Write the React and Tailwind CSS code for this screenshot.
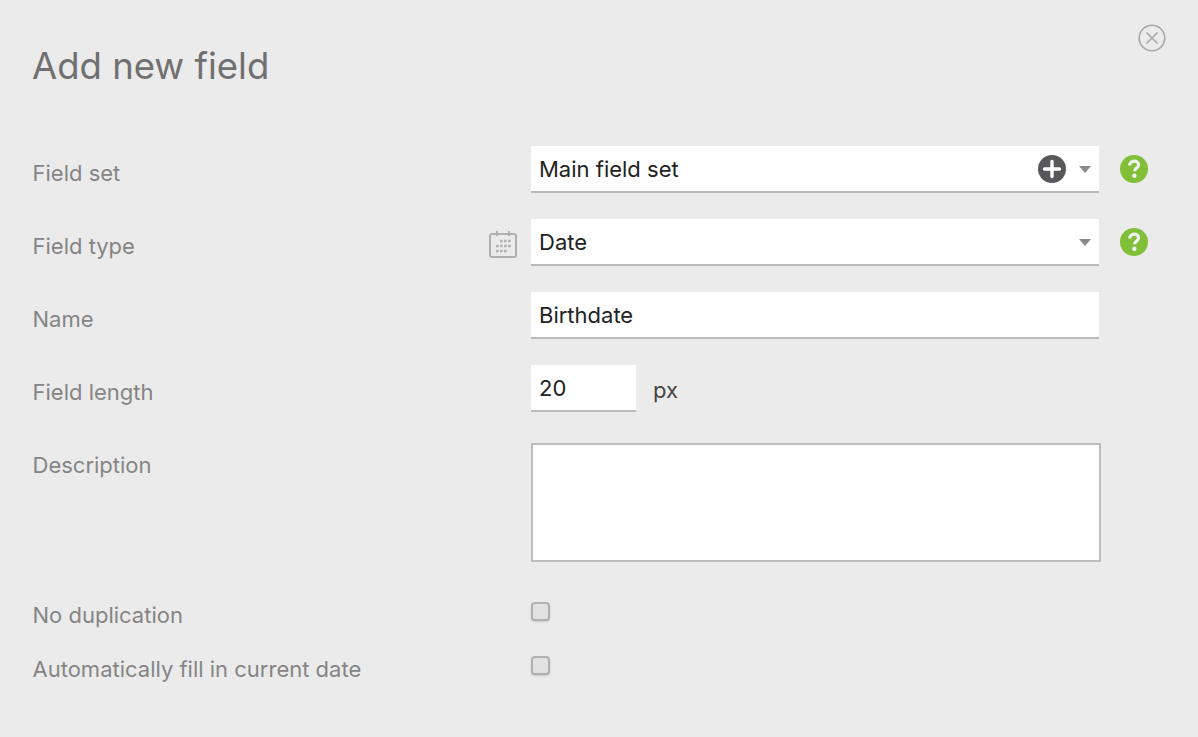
import React from 'react'

function HelpIcon() {
  return (
    <svg width="28" height="28" viewBox="0 0 28 28" className="shrink-0">
      <circle cx="14" cy="14" r="14" fill="#82bf39" />
      <path d="M9.6 10.6c0-2.7 2-4.4 4.6-4.4s4.4 1.5 4.4 3.7c0 3.1-4 3.2-4 6.3" fill="none" stroke="#f1f1f1" strokeWidth="3.2" />
      <circle cx="14.4" cy="20.8" r="2.2" fill="#f1f1f1" />
    </svg>
  )
}

function PlusIcon() {
  return (
    <svg width="28" height="28" viewBox="0 0 28 28" className="shrink-0 mr-[13px]">
      <circle cx="14" cy="14" r="14" fill="#58585a" />
      <path d="M14 6.5v15M6.5 14h15" stroke="#fff" strokeWidth="3.4" strokeLinecap="round" />
    </svg>
  )
}

function CalendarIcon() {
  return (
    <svg width="28" height="28" viewBox="0 0 28 28" className="shrink-0">
      <rect x="1" y="3" width="26" height="23" rx="2" fill="none" stroke="#b0b0b0" strokeWidth="2" />
      <path d="M8 0v5M20 0v5" stroke="#b0b0b0" strokeWidth="2" />
      <path d="M11 10h2.6M15 10h2.6M19 10h2.6M7 15h2.6M11 15h2.6M15 15h2.6M19 15h2.6M7 20h2.6M11 20h2.6M15 20h2.6" stroke="#b0b0b0" strokeWidth="2.6" />
    </svg>
  )
}

function Caret() {
  return <div className="w-0 h-0 mr-[0.5px] border-x-[6.5px] border-x-transparent border-t-[7px] border-t-[#8a8a8a]" />
}

function Checkbox() {
  return <div className="w-[19px] h-[19px] rounded-[4px] bg-[#e2e2e2] border-2 border-[#b0b0b0] shadow-[0_1px_2px_rgba(0,0,0,0.15)]" />
}

function Row({ label, icon, children }) {
  return (
    <div className="flex items-start h-[73px]">
      <div className="flex justify-between w-[498px] pr-[14px] pt-[12px] text-[#858585] text-[22px] leading-[30px]">
        <span className="-ml-[0.5px]">{label}</span>
        {icon}
      </div>
      {children}
    </div>
  )
}

function CheckRow({ label }) {
  return (
    <div className="flex items-start h-[54px]">
      <div className="w-[498px] text-[#858585] text-[22px] leading-[30px]">
        <span className="-ml-[0.5px]">{label}</span>
      </div>
      <div className="mt-[2px]"><Checkbox /></div>
    </div>
  )
}

const fieldBox = 'flex items-center h-[47px] bg-white border-b-2 border-[#b9b9b9] pl-[8px] pt-[1px] text-[22px] text-[#222]'

export default function App() {
  return (
    <div className="relative w-[1198px] h-[737px] bg-[#ebebeb] overflow-hidden px-[33px] font-['Inter',sans-serif]">
      <svg width="28" height="28" viewBox="0 0 28 28" className="absolute top-[24px] left-[1138px]">
        <circle cx="14" cy="14" r="12.8" fill="none" stroke="#a8a8a8" strokeWidth="1.6" />
        <path d="M8.5 8.5l11 11M19.5 8.5l-11 11" stroke="#a8a8a8" strokeWidth="1.6" />
      </svg>
      <h1 className="pt-[40px] -ml-px text-[36.5px] leading-[52px] text-[#707070]">Add new field</h1>
      <div className="mt-[54px]">
        <Row label="Field set">
          <div className={`${fieldBox} w-[568px] pr-[8px]`}>
            <span className="flex-1">Main field set</span>
            <PlusIcon />
            <Caret />
          </div>
          <div className="ml-[21px] mt-[9px]"><HelpIcon /></div>
        </Row>
        <Row label="Field type" icon={<CalendarIcon />}>
          <div className={`${fieldBox} w-[568px] pr-[8px]`}>
            <span className="flex-1">Date</span>
            <Caret />
          </div>
          <div className="ml-[21px] mt-[9px]"><HelpIcon /></div>
        </Row>
        <Row label="Name">
          <div className={`${fieldBox} w-[568px]`}>Birthdate</div>
        </Row>
        <Row label="Field length">
          <div className={`${fieldBox} w-[105px]`}>20</div>
          <span className="ml-[17px] mt-[9px] text-[22px] text-[#444]">px</span>
        </Row>
        <div className="flex items-start h-[162px]">
          <div className="w-[498px] pt-[12px] text-[#858585] text-[22px] leading-[30px]">
            <span className="-ml-[0.5px]">Description</span>
          </div>
          <textarea className="mt-[5px] w-[570px] h-[119px] bg-white border-2 border-[#bdbdbd] resize-none outline-none" />
        </div>
        <CheckRow label="No duplication" />
        <CheckRow label="Automatically fill in current date" />
      </div>
    </div>
  )
}
